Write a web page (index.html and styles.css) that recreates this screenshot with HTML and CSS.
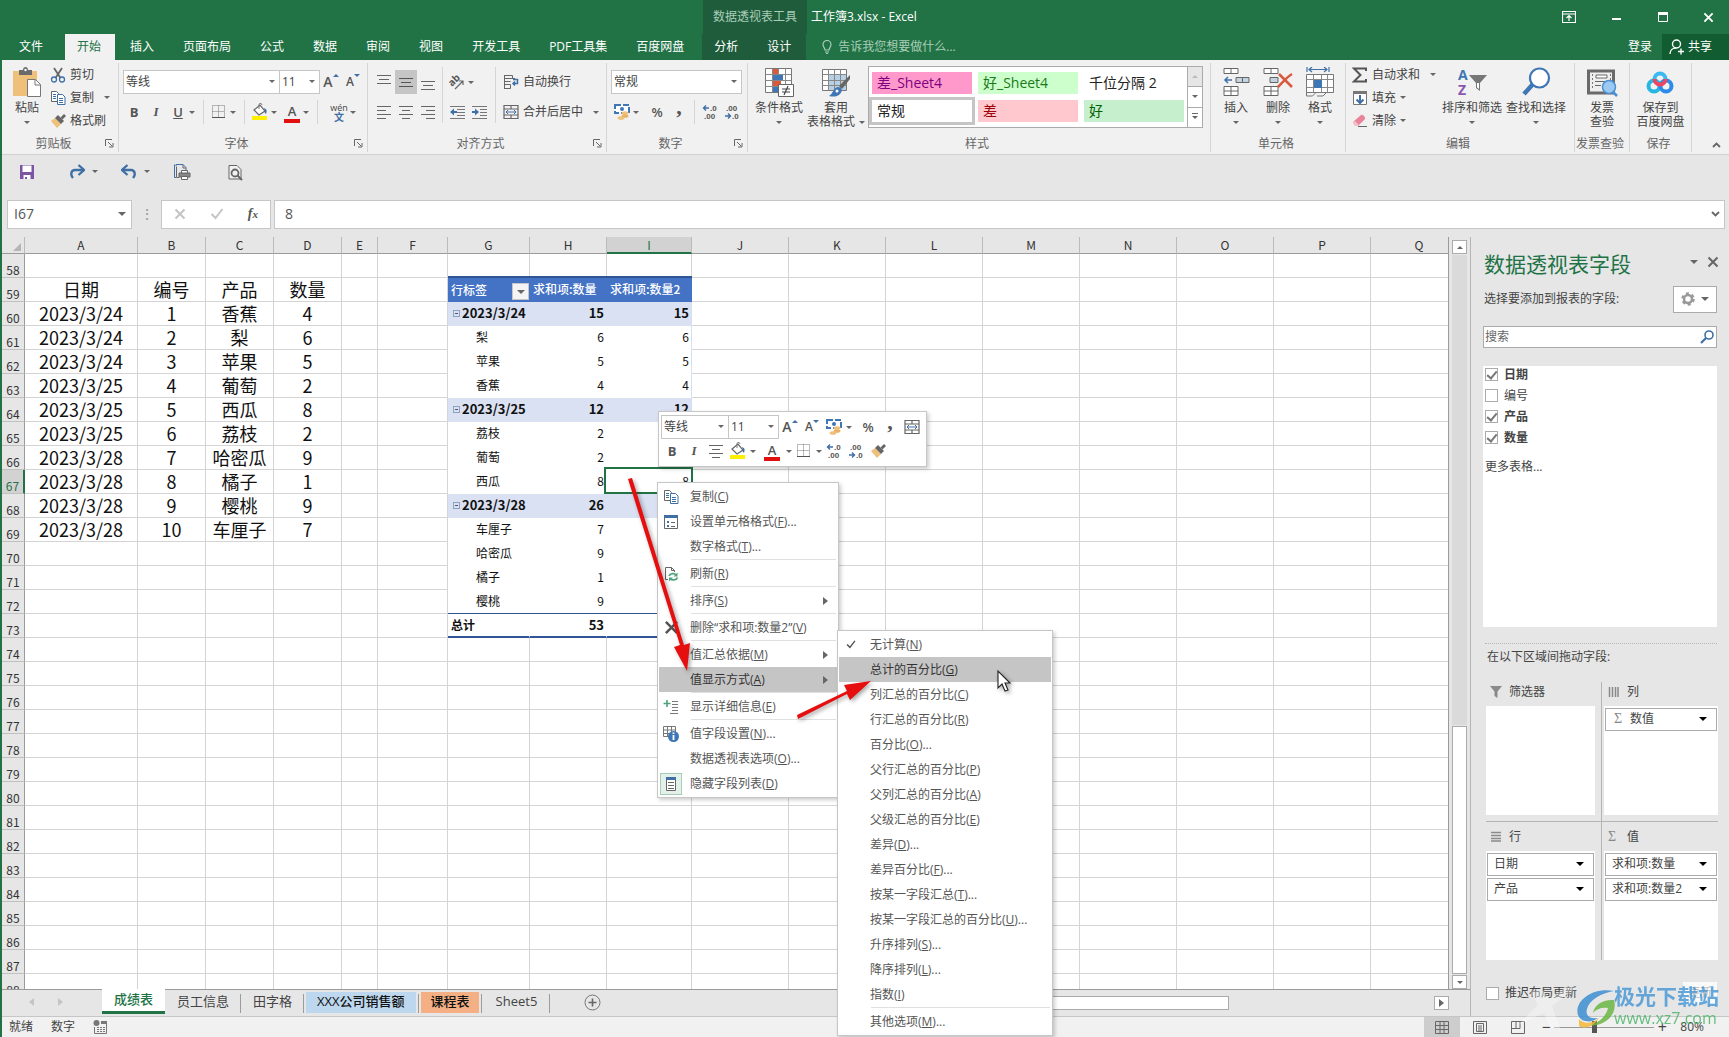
FILE: index.html
```html
<!DOCTYPE html>
<html lang="zh-CN">
<head>
<meta charset="utf-8">
<title>工作簿3.xlsx - Excel</title>
<link rel="stylesheet" href="styles.css">
</head>
<body>
<svg class="defs" aria-hidden="true">
  <symbol id="i-paste" viewBox="0 0 30 30"><path d="M1 4h24v25H1z" fill="#eec079"/><path d="M7 3h4c0-4 5-4 5 0h4v5H7z" fill="#6a6a6a"/><circle cx="13.500" cy="3" r="1.200" fill="#fff"/><path d="M15.500 12.500h8l5 5v12h-13z" fill="#fff" stroke="#777"/><path d="M23 12.500v5.500h5.500" fill="none" stroke="#777"/></symbol>
  <symbol id="i-cut" viewBox="0 0 16 16"><path d="M4 1l6.500 10M12 1L5.500 11" stroke="#666" stroke-width="1.800" fill="none"/><circle cx="4" cy="12.500" r="2.500" fill="none" stroke="#3f6fa5" stroke-width="1.300"/><circle cx="12" cy="12.500" r="2.500" fill="none" stroke="#3f6fa5" stroke-width="1.300"/></symbol>
  <symbol id="i-copy" viewBox="0 0 16 16"><path d="M1.500 1.500h5l2 2v8h-7z" fill="#fff" stroke="#666"/><path d="M3 4.500h3M3 6.500h3M3 8.500h3" stroke="#3f6fa5"/><path d="M7.500 4.500h5l2.500 2.500v7.500H7.500z" fill="#fff" stroke="#3f6fa5"/><path d="M9 8.500h4M9 10.500h4M9 12.500h4" stroke="#3f6fa5"/></symbol>
  <symbol id="i-brush" viewBox="0 0 16 16"><path d="M1 8l4-3 6 6-4 4z" fill="#eec079"/><path d="M5 5l3-3 6 6-3 3z" fill="#666"/><path d="M10.500 4.500L14 1l2 2-3.500 3.500z" fill="#666"/></symbol>
  <symbol id="i-border" viewBox="0 0 16 16"><path d="M1.500 1.500h12v12h-12zM7.500 1.500v12M1.500 7.500h12" fill="none" stroke="#777" stroke-dasharray="1 1"/><path d="M1 13.500h13" stroke="#555"/></symbol>
  <symbol id="i-fill" viewBox="0 0 18 18"><path d="M3 7l6-5 5 6-6 4z" fill="#fff" stroke="#666" stroke-width="1.200"/><path d="M8 6V1.500c0-1.500 3-1.500 3 .5" fill="none" stroke="#777"/><path d="M13 5c3 1 3 3 2 6-1-1-2-2-1-3z" fill="#3f6fa5"/><path d="M1 13h15v4H1z" fill="#ffef00"/></symbol>
  <symbol id="i-money" viewBox="0 0 18 18"><path d="M2 2h14v8H2z" fill="#fff" stroke="#3f76b5" stroke-width="2" stroke-dasharray="6 2"/><circle cx="9" cy="6" r="2" fill="#3f76b5"/><ellipse cx="12" cy="10" rx="3.500" ry="1.800" fill="#eec079"/><ellipse cx="12" cy="13" rx="3.500" ry="1.800" fill="#e8b268"/><ellipse cx="8" cy="15" rx="3.500" ry="1.800" fill="#eec079"/></symbol>
  <symbol id="i-merge" viewBox="0 0 16 16"><path d="M1 1.500h14v13H1zM1 5h14M1 11h14M8 1.500V5M8 11v3.500" fill="none" stroke="#666" stroke-width="1.200"/><path d="M3 8h10M5 6L3 8l2 2M11 6l2 2-2 2" fill="none" stroke="#3f6fa5"/></symbol>
  <symbol id="i-al" viewBox="0 0 16 16"><path d="M1 2.500h14M1 6.500h9M1 10.500h14M1 14.500h9" stroke="#666" fill="none"/></symbol>
  <symbol id="i-ac" viewBox="0 0 16 16"><path d="M1 2.500h14M4 6.500h8M1 10.500h14M4 14.500h8" stroke="#666" fill="none"/></symbol>
  <symbol id="i-ar" viewBox="0 0 16 16"><path d="M1 2.500h14M6 6.500h9M1 10.500h14M6 14.500h9" stroke="#666" fill="none"/></symbol>
  <symbol id="i-vt" viewBox="0 0 16 16"><path d="M1 1.500h14M3 5.500h10M1 9.500h14" stroke="#666" fill="none"/></symbol>
  <symbol id="i-vm" viewBox="0 0 16 16"><path d="M1 4.500h14M3 8.500h10M1 12.500h14" stroke="#555" fill="none"/></symbol>
  <symbol id="i-vb" viewBox="0 0 16 16"><path d="M1 7.500h14M3 11.500h10M1 15.500h14" stroke="#666" fill="none"/></symbol>
  <symbol id="i-outdent" viewBox="0 0 17 16"><path d="M1 2.500h15M8 5.500h8M8 8.500h8M8 11.500h8M1 14.500h15" stroke="#777"/><path d="M1 8l4-3.500v2.500h3v2H5v2.500z" fill="#3f6fa5"/></symbol>
  <symbol id="i-indent" viewBox="0 0 17 16"><path d="M1 2.500h15M9 5.500h7M9 8.500h7M9 11.500h7M1 14.500h15" stroke="#777"/><path d="M8 8L4 4.500v2.500H1v2h3v2.500z" fill="#3f6fa5"/></symbol>
  <symbol id="i-wrap" viewBox="0 0 16 16"><path d="M1.500 1v14M1.500 1.500h8v3h-8M1.500 7.500h6M1.500 10.500h6v4h-6M4 4.500h8" stroke="#666" fill="none"/><path d="M10 5.500h4.500v4H10M12 7.500L10 9.500l2 2" stroke="#3f6fa5" stroke-width="1.500" fill="none"/></symbol>
  <symbol id="i-incd" viewBox="0 0 16 16"><path d="M7 4H1.500M4 1.500L1.500 4 4 6.500" stroke="#3f6fa5" stroke-width="1.400" fill="none"/><text x="8" y="7" class="dg">.0</text><text x="2" y="15" class="dg">.00</text></symbol>
  <symbol id="i-decd" viewBox="0 0 16 16"><text x="2" y="7" class="dg">.00</text><path d="M1 12h5.500M4 9.500L6.500 12 4 14.500" stroke="#3f6fa5" stroke-width="1.400" fill="none"/><text x="8" y="15" class="dg">.0</text></symbol>
  <symbol id="i-cond" viewBox="0 0 30 30"><path d="M1.500 1.500h26v24h-26z" fill="#fff" stroke="#777"/><path d="M8.500 1.500v24M14.500 1.500v24M21.500 1.500v24M1.500 7.500h26M1.500 13.500h26M1.500 19.500h26" stroke="#888"/><path d="M9 2h5v5H9z" fill="#d8593b"/><path d="M9 8h10v5H9z" fill="#3f76b5"/><path d="M9 14h8v5H9z" fill="#d8593b"/><path d="M9 20h5v5H9z" fill="#3f76b5"/><path d="M14.500 17.500h15v12h-15z" fill="#fff" stroke="#666"/><path d="M18 22h8M18 25h8M24 19l-4 9" stroke="#444" stroke-width="1.200"/></symbol>
  <symbol id="i-tfmt" viewBox="0 0 30 30"><path d="M1.500 2.500h24v21h-24z" fill="#fff" stroke="#777"/><path d="M8 8h17v15H8z" fill="#b8d0e4"/><path d="M7.500 2.500v21M13.500 2.500v21M19.500 2.500v21M1.500 7.500h24M1.500 13.500h24M1.500 18.500h24" stroke="#888"/><path d="M29 8v4l-8 10-3-3z" fill="#666"/><path d="M17 20c4 0 5 4 2 7-3 3-7 3-11 2 4-2 4-8 9-9z" fill="#3f76b5"/><circle cx="16" cy="24" r="1.500" fill="#fff"/></symbol>
  <symbol id="i-ins" viewBox="0 0 28 30"><path d="M2 1.500h14v5H2zM9 1.500v5M2 19.500h14v9H2zM9 19.500v9M2 24h14" fill="#fff" stroke="#666"/><path d="M14 10.500h13v5H14zM20.500 10.500v5" fill="#c3d3df" stroke="#666"/><path d="M10 13H3M6 10l-3 3 3 3" fill="none" stroke="#3f6fa5" stroke-width="1.500"/></symbol>
  <symbol id="i-del" viewBox="0 0 30 30"><path d="M1 1.500h14v5H1zM8 1.500v5M1 19.500h14v9H1zM8 19.500v9M1 24h14" fill="#fff" stroke="#666"/><path d="M7 10.500h8v5H7z" fill="#c3d3df" stroke="#666"/><path d="M16 7l13 13M29 7c-5 3-9 8-14 13" fill="none" stroke="#d8593b" stroke-width="2.500"/></symbol>
  <symbol id="i-fmt" viewBox="0 0 30 30"><path d="M2 0v5M24 0v5M4 2.500h18M7 0L4 2.500 7 5M19 0l3 2.500L19 5" fill="none" stroke="#3f6fa5" stroke-width="1.200"/><path d="M1.500 7.500h27v18h-27z" fill="#fff" stroke="#777"/><path d="M8.500 7.500v18M16.500 7.500v18M22.500 7.500v18M1.500 12.500h27M1.500 20.500h27" stroke="#888"/><path d="M9 13h8v8H9z" fill="#3f76b5"/><path d="M1.500 25v4h6l3-3M12 29h6l3-3" fill="none" stroke="#777"/></symbol>
  <symbol id="i-sum" viewBox="0 0 16 16"><path d="M14 4V1.500H2L8.500 8 2 14.500h12V12" fill="none" stroke="#555" stroke-width="2"/></symbol>
  <symbol id="i-down" viewBox="0 0 16 16"><path d="M1.500 1.500h13v13h-13z" fill="#fff" stroke="#777"/><path d="M1 1h14v3H1z" fill="#777"/><path d="M8 5v8M4.500 9.500L8 13l3.500-3.500" fill="none" stroke="#3f6fa5" stroke-width="2"/></symbol>
  <symbol id="i-erase" viewBox="0 0 16 16"><path d="M1 9l8-7c1-1 5 2 4 4l-7 7H3z" fill="#e8839a"/><path d="M1 9l2-1 4 4-1 1H3z" fill="#f3c0ca"/><path d="M6 13.500h9" stroke="#666"/></symbol>
  <symbol id="i-sort" viewBox="0 0 30 30"><text x="1" y="13" class="az a">A</text><text x="1" y="28" class="az z">Z</text><path d="M12 8h18l-7 8v8l-4-3v-5z" fill="#777"/><path d="M20 16l2 0v6l-2-1.500z" fill="#fff"/></symbol>
  <symbol id="i-find" viewBox="0 0 30 30"><path d="M12 17L3 27" stroke="#3f76b5" stroke-width="4.500"/><circle cx="18.500" cy="11" r="9.500" fill="#fff" stroke="#3f76b5" stroke-width="2.200"/></symbol>
  <symbol id="i-inv" viewBox="0 0 32 30"><path d="M2.500 4h25v22h-25z" fill="#eee" stroke="#6a6a6a" stroke-width="3"/><path d="M6.500 7v16M24.500 7v8" stroke="#777" stroke-dasharray="2 2"/><path d="M10 8h11v3H10zM9 14.500h12M9 18.500h6" fill="#fff" stroke="#666"/><circle cx="23" cy="20" r="6.500" fill="#9cc9f2" stroke="#4a91d4" stroke-width="1.500"/><path d="M27 25l4 4" stroke="#4a91d4" stroke-width="2.500"/></symbol>
  <symbol id="i-disk" viewBox="0 0 30 30"><circle cx="9" cy="19" r="5.500" fill="none" stroke="#27b6e2" stroke-width="4"/><circle cx="21" cy="19" r="5.500" fill="none" stroke="#2d8ce8" stroke-width="4"/><path d="M9.500 12a5.500 5.500 0 1 1 11 0" fill="none" stroke="#3cb9ef" stroke-width="4"/><path d="M9.500 12a5.500 5.500 0 0 0 11 0" fill="none" stroke="#ee4562" stroke-width="4"/></symbol>
  <symbol id="i-save" viewBox="0 0 16 16"><path d="M1 1h14v14H1z" fill="#7d53a4"/><path d="M3.500 1.500h9V8h-9z" fill="#fff"/><path d="M4.500 11h7v4h-7z" fill="#fff"/><path d="M6 13h2v2H6z" fill="#7d53a4"/></symbol>
  <symbol id="i-redo" viewBox="0 0 16 16"><path d="M14 6H6C2 6 1 11 4 14" fill="none" stroke="#3f6fa5" stroke-width="2.300"/><path d="M9.500 1L15 6l-5.500 5" fill="none" stroke="#3f6fa5" stroke-width="2.300"/></symbol>
  <symbol id="i-pp" viewBox="0 0 18 18"><path d="M3 3V1.500h7l3 3V8M3 14.500H1.500v-13" fill="none" stroke="#3f6fa5"/><path d="M3.500 3.500v11H6M10 1.500V5h3" fill="none" stroke="#666"/><path d="M6 10h11v4H6z" fill="#888" stroke="#666"/><path d="M8.500 7.500h6V10h-6zM8.500 13.500h6v3h-6z" fill="#fff" stroke="#666"/></symbol>
  <symbol id="i-pv" viewBox="0 0 16 16"><path d="M2 1.500h8l4 4V15H2z" fill="#f2f2f2" stroke="#666"/><circle cx="8" cy="9" r="3.500" fill="#f2f2f2" stroke="#666" stroke-width="1.800"/><path d="M10.500 11.500L15 16" stroke="#666" stroke-width="2"/></symbol>
  <symbol id="i-launch" viewBox="0 0 9 9"><path d="M.5 7V.5H7M3 3l4 4M8 4v4H4" fill="none" stroke="#666"/></symbol>
  <symbol id="i-x" viewBox="0 0 12 12"><path d="M1.500 1.500l9 9M10.500 1.500l-9 9" stroke="currentColor" stroke-width="2"/></symbol>
  <symbol id="i-check" viewBox="0 0 14 12"><path d="M1.500 6l4 4 7-9" fill="none" stroke="currentColor" stroke-width="2"/></symbol>
  <symbol id="i-panel" viewBox="0 0 16 16"><path d="M1.500 1.500h13v13h-13z" fill="#fff" stroke="#666"/><path d="M1 1h14v3H1z" fill="#3f6fa5"/><path d="M4 7h2v2H4zM4 11h2v2H4z" fill="#3f6fa5"/><path d="M8 8.500h4M8 12.500h4" stroke="#666"/></symbol>
  <symbol id="i-refresh" viewBox="0 0 16 16"><path d="M5 13.500H2.500v-12h6l3 3V6M8.500 1.500v3h3" fill="none" stroke="#666"/><path d="M6 10c1-3 6-3 7-1M14.500 11.500c-1 3-6 3-7 1" fill="none" stroke="#4ea37a" stroke-width="1.800"/><path d="M14.500 6.500v4h-4zM6 15.500v-4h4z" fill="#4ea37a"/></symbol>
  <symbol id="i-detail" viewBox="0 0 16 16"><path d="M4 1v7M.5 4.500h7" stroke="#4ea37a" stroke-width="1.600"/><path d="M9 2.500h6M9 5.500h6M9 8.500h6M9 11.500h6M7 14.500h8" stroke="#777"/></symbol>
  <symbol id="i-info" viewBox="0 0 18 18"><path d="M1.500 1.500h12v10h-12zM5.500 1.500v10M9.500 1.500v10M1.500 5h12M1.500 8.500h12" fill="#fff" stroke="#777"/><circle cx="11.500" cy="11.500" r="5.500" fill="#3f76b5"/><path d="M11.500 10v5M11.500 7.500v1.500" stroke="#fff" stroke-width="1.800"/></symbol>
  <symbol id="i-list" viewBox="0 0 16 16"><path d="M3.500 1.500h9v13h-9z" fill="#fff" stroke="#666"/><path d="M3 1h10v3H3z" fill="#3f6fa5"/><path d="M5 6.500h6M5 9.500h6M5 12.500h6" stroke="#666"/></symbol>
  <symbol id="i-funnel" viewBox="0 0 12 12"><path d="M0 0h12L7.500 5.500V12l-3-2V5.500z" fill="#8a8a8a"/></symbol>
</svg>

<div class="window">
  <header class="top">
    <div class="titlebar">
      <span class="ctx-title">数据透视表工具</span>
      <span class="doc-title">工作簿3.xlsx - Excel</span>
      <div class="winbtns">
        <button aria-label="功能区显示选项"><svg width="14" height="12" viewBox="0 0 14 12"><path d="M.5.5h13v11H.5zM.5 3h13M7 10V5M4.500 7L7 4.500 9.500 7" fill="none" stroke="#fff" stroke-width="1.200"/></svg></button>
        <button aria-label="最小化"><svg width="10" height="10" viewBox="0 0 10 10"><path d="M0 7h9" stroke="#fff" stroke-width="2"/></svg></button>
        <button aria-label="最大化"><svg width="10" height="10" viewBox="0 0 10 10"><path d="M.5.5h9v9h-9z" fill="none" stroke="#fff"/><path d="M0 0h10v3H0z" fill="#fff"/></svg></button>
        <button aria-label="关闭" class="white"><svg width="11" height="11"><use href="#i-x"/></svg></button>
      </div>
    </div>
    <nav class="tabs">
      <button class="file">文件</button><button class="on">开始</button><button>插入</button><button>页面布局</button><button>公式</button><button>数据</button><button>审阅</button><button>视图</button><button>开发工具</button><button>PDF工具集</button><button>百度网盘</button><span class="ctx-tabs"><button>分析</button><button>设计</button></span>
      <button class="tell"><svg width="10" height="14" viewBox="0 0 10 14"><path d="M3 10C3 8 1 7 1 4.500a4 4 0 0 1 8 0C9 7 7 8 7 10zM3 12h4M4 13.500h2" fill="none" stroke="#a9cdb8" stroke-width="1.200"/></svg>告诉我您想要做什么...</button>
      <button class="login">登录</button>
      <button class="share"><svg width="15" height="16" viewBox="0 0 15 16"><circle cx="7.500" cy="5" r="4" fill="none" stroke="#fff" stroke-width="1.400"/><path d="M1 15c0-4 3-6 6-6M9 12.500h6M12 9.500v6" fill="none" stroke="#fff" stroke-width="1.400"/></svg>共享</button>
    </nav>
  </header>

  <section class="ribbon">
    <div class="group">
      <div class="body clip">
        <button class="big"><svg width="30" height="30"><use href="#i-paste"/></svg><span>粘贴</span><i class="dd"></i></button>
        <div class="stack">
          <button class="sm"><svg width="16" height="16"><use href="#i-cut"/></svg>剪切</button>
          <button class="sm"><svg width="16" height="16"><use href="#i-copy"/></svg>复制<i class="dd far"></i></button>
          <button class="sm"><svg width="16" height="16"><use href="#i-brush"/></svg>格式刷</button>
        </div>
      </div>
      <footer><span>剪贴板</span><svg width="9" height="9"><use href="#i-launch"/></svg></footer>
    </div>
    <div class="group">
      <div class="body rows">
        <div class="row">
          <span class="sel w-font"><select aria-label="字体"><option>等线</option></select></span><span class="sel w-size"><select aria-label="字号"><option>11</option></select></span>
          <button class="ic glyph lg">A<sup class="up"></sup></button><button class="ic glyph md">A<sup class="dn"></sup></button>
        </div>
        <div class="row">
          <button class="ic glyph b">B</button><button class="ic glyph it">I</button><button class="ic glyph u">U</button><i class="dd"></i>
          <hr><button class="ic" aria-label="边框"><svg width="16" height="16"><use href="#i-border"/></svg></button><i class="dd"></i>
          <hr><button class="ic" aria-label="填充颜色"><svg width="18" height="18"><use href="#i-fill"/></svg></button><i class="dd"></i><button class="ic glyph fc">A</button><i class="dd"></i>
          <hr><button class="ic wen"><span>wén</span><b>文</b></button><i class="dd"></i>
        </div>
      </div>
      <footer><span>字体</span><svg width="9" height="9"><use href="#i-launch"/></svg></footer>
    </div>
    <div class="group">
      <div class="body align">
        <div class="rows">
          <div class="row"><button class="ic" aria-label="顶端对齐"><svg width="16" height="16"><use href="#i-vt"/></svg></button><button class="ic pressed" aria-label="垂直居中"><svg width="16" height="16"><use href="#i-vm"/></svg></button><button class="ic" aria-label="底端对齐"><svg width="16" height="16"><use href="#i-vb"/></svg></button></div>
          <div class="row"><button class="ic" aria-label="左对齐"><svg width="16" height="16"><use href="#i-al"/></svg></button><button class="ic" aria-label="居中"><svg width="16" height="16"><use href="#i-ac"/></svg></button><button class="ic" aria-label="右对齐"><svg width="16" height="16"><use href="#i-ar"/></svg></button></div>
        </div>
        <div class="rows ruled w-ind">
          <div class="row"><button class="ic" aria-label="方向"><svg width="18" height="18" viewBox="0 0 18 18"><text x="1" y="11" class="ab" transform="rotate(-45 6 9)">ab</text><path d="M7 16l8-8M11 8h4v4" fill="none" stroke="#666" stroke-width="1.200"/></svg></button><i class="dd"></i></div>
          <div class="row"><button class="ic" aria-label="减少缩进量"><svg width="17" height="16"><use href="#i-outdent"/></svg></button><button class="ic" aria-label="增加缩进量"><svg width="17" height="16"><use href="#i-indent"/></svg></button></div>
        </div>
        <div class="rows ruled">
          <div class="row"><button class="sm"><svg width="16" height="16"><use href="#i-wrap"/></svg>自动换行</button></div>
          <div class="row"><button class="sm"><svg width="16" height="16"><use href="#i-merge"/></svg>合并后居中<i class="dd far"></i></button></div>
        </div>
      </div>
      <footer><span>对齐方式</span><svg width="9" height="9"><use href="#i-launch"/></svg></footer>
    </div>
    <div class="group">
      <div class="body rows">
        <div class="row"><span class="sel w-num"><select aria-label="数字格式"><option>常规</option></select></span></div>
        <div class="row num-row"><button class="ic" aria-label="会计数字格式"><svg width="18" height="18"><use href="#i-money"/></svg></button><i class="dd wide"></i><button class="ic glyph">%</button><button class="ic comma">,</button><hr><button class="ic" aria-label="增加小数位数"><svg width="16" height="16"><use href="#i-incd"/></svg></button><button class="ic" aria-label="减少小数位数"><svg width="16" height="16"><use href="#i-decd"/></svg></button></div>
      </div>
      <footer><span>数字</span><svg width="9" height="9"><use href="#i-launch"/></svg></footer>
    </div>
    <div class="group">
      <div class="body styles">
        <button class="big"><svg width="30" height="30"><use href="#i-cond"/></svg><span>条件格式</span><i class="dd"></i></button>
        <button class="big"><svg width="30" height="30"><use href="#i-tfmt"/></svg><span>套用</span><span class="inl">表格格式<i class="dd"></i></span></button>
        <div class="gallery">
          <div class="swatches">
            <button class="s-pink">差_Sheet4</button><button class="s-lime">好_Sheet4</button><button>千位分隔 2</button>
            <button class="s-on">常规</button><button class="s-red">差</button><button class="s-green">好</button>
          </div>
          <div class="gscroll"><button class="off" aria-label="上一行"><i class="uu"></i></button><button aria-label="下一行"><i class="dd"></i></button><button aria-label="其他"><i class="dd bar"></i></button></div>
        </div>
      </div>
      <footer><span>样式</span></footer>
    </div>
    <div class="group">
      <div class="body cells">
        <button class="big"><svg width="28" height="30"><use href="#i-ins"/></svg><span>插入</span><i class="dd"></i></button>
        <button class="big"><svg width="30" height="30"><use href="#i-del"/></svg><span>删除</span><i class="dd"></i></button>
        <button class="big"><svg width="30" height="30"><use href="#i-fmt"/></svg><span>格式</span><i class="dd"></i></button>
      </div>
      <footer><span>单元格</span></footer>
    </div>
    <div class="group">
      <div class="body edit">
        <div class="stack">
          <button class="sm"><svg width="16" height="16"><use href="#i-sum"/></svg>自动求和<i class="dd far"></i></button>
          <button class="sm"><svg width="16" height="16"><use href="#i-down"/></svg>填充<i class="dd"></i></button>
          <button class="sm"><svg width="16" height="16"><use href="#i-erase"/></svg>清除<i class="dd"></i></button>
        </div>
        <button class="big"><svg width="30" height="30"><use href="#i-sort"/></svg><span>排序和筛选</span><i class="dd"></i></button>
        <button class="big"><svg width="30" height="30"><use href="#i-find"/></svg><span>查找和选择</span><i class="dd"></i></button>
      </div>
      <footer><span>编辑</span></footer>
    </div>
    <div class="group">
      <div class="body one"><button class="big"><svg width="32" height="30"><use href="#i-inv"/></svg><span>发票</span><span>查验</span></button></div>
      <footer><span>发票查验</span></footer>
    </div>
    <div class="group">
      <div class="body one"><button class="big"><svg width="30" height="30"><use href="#i-disk"/></svg><span>保存到</span><span>百度网盘</span></button></div>
      <footer><span>保存</span></footer>
    </div>
    <button class="collapse" aria-label="折叠功能区"><svg width="9" height="6" viewBox="0 0 9 6"><path d="M1 5l3.500-3.500L8 5" fill="none" stroke="#666" stroke-width="1.800"/></svg></button>
  </section>

  <div class="qat">
    <button aria-label="保存"><svg width="16" height="16"><use href="#i-save"/></svg></button>
    <button aria-label="恢复"><svg width="16" height="16"><use href="#i-redo"/></svg><i class="dd"></i></button>
    <button aria-label="撤消"><svg width="16" height="16" class="flip"><use href="#i-redo"/></svg><i class="dd"></i></button>
    <button aria-label="打印"><svg width="18" height="18"><use href="#i-pp"/></svg></button>
    <button aria-label="打印预览"><svg width="16" height="18"><use href="#i-pv"/></svg></button>
  </div>

  <div class="fbar">
    <label class="namebox"><input value="I67" aria-label="名称框"><i class="dd"></i></label>
    <span class="dots">⋮</span>
    <div class="fbtns"><button class="pale" aria-label="取消"><svg width="12" height="12"><use href="#i-x"/></svg></button><button class="pale" aria-label="输入"><svg width="14" height="12"><use href="#i-check"/></svg></button><button class="fx"><span>f</span><small>x</small></button></div>
    <label class="formula"><input value="8" aria-label="编辑栏"><svg width="9" height="6" viewBox="0 0 9 6"><path d="M1 1l3.500 3.500L8 1" fill="none" stroke="#666" stroke-width="1.800"/></svg></label>
  </div>

  <main class="main">
    <div class="book">
      <div class="viewport"><table class="sheet" id="sheet"></table></div>
      <div class="vscroll"><button aria-label="向上滚动"><i class="uu"></i></button><div class="track"></div><div class="thumb"></div><button aria-label="向下滚动"><i class="dd"></i></button></div>
      <div class="sheetbar">
        <div class="nav"><i class="la"></i><i class="ra"></i></div>
        <div class="stabs"><button class="on">成绩表</button><button>员工信息</button><button>田字格</button><button class="blue">XXX公司销售额</button><button class="orange">课程表</button><button>Sheet5</button></div>
        <button class="add" aria-label="新工作表"><svg width="17" height="17" viewBox="0 0 17 17"><circle cx="8.500" cy="8.500" r="7.500" fill="none" stroke="#777"/><path d="M8.500 4.500v8M4.500 8.500h8" stroke="#666" stroke-width="1.600"/></svg></button>
        <div class="hscroll"><div class="hthumb"></div><button aria-label="向右滚动"><i class="ra dark"></i></button></div>
      </div>
    </div>

    <aside class="pane">
      <div class="ptitle"><h2>数据透视表字段</h2><i class="dd big-dd"></i><button aria-label="关闭"><svg width="12" height="12"><use href="#i-x"/></svg></button></div>
      <div class="psub"><span>选择要添加到报表的字段:</span><button class="gear" aria-label="工具"><svg width="14" height="14" viewBox="0 0 14 14"><circle cx="7" cy="7" r="4" fill="none" stroke="#999" stroke-width="2.500"/><circle cx="7" cy="7" r="5.500" fill="none" stroke="#999" stroke-width="2.500" stroke-dasharray="2.900 2.900"/></svg><i class="dd big-dd"></i></button></div>
      <label class="search"><input placeholder="搜索" aria-label="搜索"><svg width="14" height="14" viewBox="0 0 14 14"><circle cx="9" cy="5" r="4" fill="none" stroke="#3f6fa5" stroke-width="1.600"/><path d="M6 8l-5 5" stroke="#3f6fa5" stroke-width="2.200"/></svg></label>
      <div class="fields">
        <label class="bold"><input type="checkbox" checked>日期</label>
        <label><input type="checkbox">编号</label>
        <label class="bold"><input type="checkbox" checked>产品</label>
        <label class="bold"><input type="checkbox" checked>数量</label>
        <a href="#more">更多表格...</a>
      </div>
      <div class="drag">在以下区域间拖动字段:</div>
      <div class="areas">
        <section><h3><svg width="12" height="12"><use href="#i-funnel"/></svg>筛选器</h3><div class="drop"></div></section>
        <section><h3><svg width="12" height="12" viewBox="0 0 12 12"><path d="M1.500 1v10M4.500 1v10M7.500 1v10M10 1v10" stroke="#8a8a8a" stroke-width="1.500"/></svg>列</h3><div class="drop"><button><em>Σ</em>数值<i class="dd k"></i></button></div></section>
        <section><h3><svg width="12" height="12" viewBox="0 0 12 12"><path d="M1 1.500h10M1 4.500h10M1 7.500h10M1 10h10" stroke="#8a8a8a" stroke-width="1.500"/></svg>行</h3><div class="drop"><button>日期<i class="dd k"></i></button><button>产品<i class="dd k"></i></button></div></section>
        <section><h3><em>Σ</em>值</h3><div class="drop"><button>求和项:数量<i class="dd k"></i></button><button>求和项:数量2<i class="dd k"></i></button></div></section>
      </div>
      <div class="defer"><label><input type="checkbox">推迟布局更新</label><button>更新</button></div>
    </aside>
  </main>

  <footer class="status">
    <span>就绪</span><span>数字</span>
    <svg width="14" height="14" viewBox="0 0 14 14"><circle cx="3.500" cy="3" r="3" fill="#777"/><path d="M8 1h6v3H8z" fill="#777"/><path d="M1.500 7v6.500h12V4" fill="none" stroke="#777"/><path d="M4 7.500h8M4 9.500h8M4 11.500h8" stroke="#777" stroke-dasharray="2 1"/></svg>
    <div class="views">
      <button class="on" aria-label="普通"><svg width="14" height="13" viewBox="0 0 14 13"><path d="M.5.5h13v12H.5zM5 .5v12M9 .5v12M.5 4.500h13M.5 8.500h13" fill="none" stroke="#666"/></svg></button>
      <button aria-label="页面布局"><svg width="14" height="13" viewBox="0 0 14 13"><path d="M.5.5h13v12H.5zM3.500 2.500h7v8h-7zM5 5h4M5 7h4M5 9h4" fill="none" stroke="#666"/></svg></button>
      <button aria-label="分页预览"><svg width="14" height="13" viewBox="0 0 14 13"><path d="M.5.5h13v12H.5zM5 .5v7M9 .5v7M.5 7.500h8.500" fill="none" stroke="#666"/></svg></button>
    </div>
    <div class="zoombox"><button class="zb">−</button><input type="range" class="zoom" min="0" max="100" value="40" aria-label="缩放"><button class="zb">+</button><span class="pct">80%</span></div>
  </footer>

  <div class="minibar">
    <div class="row"><span class="sel w-mf"><select aria-label="字体"><option>等线</option></select></span><span class="sel w-ms"><select aria-label="字号"><option>11</option></select></span><button class="ic glyph lg">A<sup class="up"></sup></button><button class="ic glyph md">A<sup class="dn"></sup></button><button class="ic" aria-label="会计数字格式"><svg width="18" height="18"><use href="#i-money"/></svg></button><i class="dd"></i><button class="ic glyph pc">%</button><button class="ic comma">,</button><button class="ic" aria-label="合并后居中"><svg width="16" height="16"><use href="#i-merge"/></svg></button></div>
    <div class="row"><button class="ic glyph b">B</button><button class="ic glyph it">I</button><button class="ic" aria-label="居中"><svg width="16" height="16"><use href="#i-ac"/></svg></button><button class="ic" aria-label="填充颜色"><svg width="18" height="18"><use href="#i-fill"/></svg></button><i class="dd"></i><button class="ic glyph fc">A</button><i class="dd"></i><button class="ic" aria-label="边框"><svg width="16" height="16"><use href="#i-border"/></svg></button><i class="dd"></i><button class="ic" aria-label="增加小数位数"><svg width="16" height="16"><use href="#i-incd"/></svg></button><button class="ic" aria-label="减少小数位数"><svg width="16" height="16"><use href="#i-decd"/></svg></button><button class="ic" aria-label="格式刷"><svg width="16" height="16"><use href="#i-brush"/></svg></button></div>
  </div>

  <div class="menu ctx">
    <button><svg width="16" height="16"><use href="#i-copy"/></svg><span>复制(<u>C</u>)</span></button>
    <button><svg width="16" height="16"><use href="#i-panel"/></svg><span>设置单元格格式(<u>F</u>)...</span></button>
    <button><span>数字格式(<u>T</u>)...</span></button><hr>
    <button><svg width="16" height="16"><use href="#i-refresh"/></svg><span>刷新(<u>R</u>)</span></button><hr>
    <button><span>排序(<u>S</u>)</span><i class="ra sub"></i></button><hr>
    <button><svg width="15" height="15"><use href="#i-x"/></svg><span>删除“求和项:数量2”(<u>V</u>)</span></button><hr>
    <button><span>值汇总依据(<u>M</u>)</span><i class="ra sub"></i></button>
    <button class="hot"><span>值显示方式(<u>A</u>)</span><i class="ra sub"></i></button><hr>
    <button><svg width="16" height="16"><use href="#i-detail"/></svg><span>显示详细信息(<u>E</u>)</span></button><hr>
    <button><svg width="18" height="18"><use href="#i-info"/></svg><span>值字段设置(<u>N</u>)...</span></button>
    <button><span>数据透视表选项(<u>O</u>)...</span></button>
    <button><svg width="20" height="20" class="boxed"><use href="#i-list"/></svg><span>隐藏字段列表(<u>D</u>)</span></button>
  </div>

  <div class="menu submenu">
    <button><svg width="10" height="9"><use href="#i-check"/></svg><span>无计算(<u>N</u>)</span></button>
    <button class="hot"><span>总计的百分比(<u>G</u>)</span></button>
    <button><span>列汇总的百分比(<u>C</u>)</span></button>
    <button><span>行汇总的百分比(<u>R</u>)</span></button>
    <button><span>百分比(<u>O</u>)...</span></button>
    <button><span>父行汇总的百分比(<u>P</u>)</span></button>
    <button><span>父列汇总的百分比(<u>A</u>)</span></button>
    <button><span>父级汇总的百分比(<u>E</u>)</span></button>
    <button><span>差异(<u>D</u>)...</span></button>
    <button><span>差异百分比(<u>F</u>)...</span></button>
    <button><span>按某一字段汇总(<u>T</u>)...</span></button>
    <button><span>按某一字段汇总的百分比(<u>U</u>)...</span></button>
    <button><span>升序排列(<u>S</u>)...</span></button>
    <button><span>降序排列(<u>L</u>)...</span></button>
    <button><span>指数(<u>I</u>)</span></button><hr>
    <button><span>其他选项(<u>M</u>)...</span></button>
  </div>

  <svg class="arrows" width="400" height="260" viewBox="0 0 400 260" aria-hidden="true">
    <g fill="#e60f0f"><path d="M8 8l4-1 52 167 6-2-3 28-13-24 6-2z"/><path d="M177 244l50-24-3-6 27-4-21 19-3-6-49 25z"/></g>
    <path d="M378 200v17l4-4 3 7 3-1-3-7h5z" fill="#fff" stroke="#222" stroke-width="1.100"/>
  </svg>

  <div class="mark">
    <svg width="150" height="50" viewBox="0 0 150 50" aria-hidden="true"><path d="M14 10h14l4 8L52 5l8 2-24 18 8 22H34l-6-15L2 44l20-20z" fill="#fff" opacity=".4"/><path d="M98 10C74 6 58 22 62 34c3 8 14 8 20 3-8 1-13-2-11-9 2-9 14-16 27-18z" fill="#3e8ed0"/><path d="M98 19c4 14-8 27-28 26 12-2 20-9 22-18-6-1-12 1-15 5 1-8 10-14 21-13z" fill="#6cb644"/><path d="M63 38c5 6 15 4 20-1-4 8-14 12-20 8z" fill="#f2b93b"/></svg>
    <div><strong>极光下载站</strong><a href="#site">www.xz7.com</a></div>
  </div>
</div>
<script src="script.js"></script>
</body>
</html>
```
FILE: styles.css
```css
* { box-sizing: border-box; }
html, body { margin: 0; height: 100%; }
body { font: 12px/16px "Open Sans", "Noto Sans CJK SC", sans-serif; color: #444; background: #e6e6e6; }
button, input, select { font: inherit; color: inherit; margin: 0; padding: 0; border: 0; background: none; border-radius: 0; }
button { white-space: nowrap; text-align: left; }
input:focus { outline: 0; }
svg { flex: none; display: block; }
i, em { font-style: normal; flex: none; }
.defs { display: none; }
.window { position: relative; height: 100vh; min-height: 700px; display: flex; flex-direction: column; border-left: 2px solid #217346; overflow: hidden; }

/* small triangles */
.dd, .uu { width: 0; height: 0; border: 3px solid transparent; }
.dd { border-top-color: #666; border-bottom: 0; }
.uu { border-bottom-color: #666; border-top: 0; }
.la, .ra { width: 0; height: 0; border: 4px solid transparent; }
.la { border-right: 5px solid #c4c4c4; border-left: 0; }
.ra { border-left: 5px solid #c4c4c4; border-right: 0; }
.ra.dark, .ra.sub { border-left-color: #666; }
.big-dd { border-width: 4px; border-bottom: 0; }
.dd.k { border-width: 4px; border-bottom: 0; border-top-color: #000; }

/* title bar and tabs */
.top { background: #217346; color: #fff; flex: none; }
.titlebar { display: flex; height: 34px; line-height: 34px; padding-left: 701px; }
.ctx-title { width: 104px; text-align: center; background: #1e5c3b; color: #a9cdb8; }
.doc-title { padding-left: 4px; }
.winbtns { margin-left: auto; display: flex; align-items: center; padding-right: 15px; }
.winbtns button { width: 46px; display: flex; justify-content: flex-end; }
.white { color: #fff; }
.tabs { display: flex; height: 26px; }
.tabs button { padding: 0 14px 0 15px; height: 26px; line-height: 24px; }
.tabs .file { padding: 0 22px 0 17px; }
.tabs .on { background: #f1f1f1; color: #217346; padding: 0 14px 0 12px; }
.ctx-tabs { background: #1e5c3b; width: 104px; display: flex; margin-left: 4px; }
.ctx-tabs button { padding: 0 15px 0 12px; }
.ctx-tabs button + button { padding: 0 14px; }
.tabs .tell { display: flex; align-items: center; gap: 6px; color: #a9cdb8; padding: 0 0 0 16px; }
.tabs .login { margin-left: auto; padding: 0 10px; }
.tabs .share { width: 67px; background: #115c30; display: flex; align-items: center; gap: 4px; padding: 0 0 0 7px; }

/* ribbon */
.ribbon { display: grid; grid-template-columns: 117px 249px 239px 141px 463px 135px 229px 55px 62px 1fr; height: 95px; flex: none; background: #f1f1f1; border-bottom: 1px solid #d2d2d2; padding: 3px 0 2px; }
.group { border-right: 1px solid #d5d5d5; display: flex; flex-direction: column; min-width: 0; }
.group .body { flex: 1; display: flex; padding-left: 4px; }
.group footer { height: 17px; display: flex; align-items: center; color: #666; padding-right: 4px; }
.group footer span { flex: 1; text-align: center; white-space: nowrap; }
.body.rows { flex-direction: column; }
.rows .row { height: 30px; }
.row { display: flex; align-items: center; }
.row hr { width: 1px; height: 24px; border: 0; background: #d5d5d5; margin: 0 4px 0 8px; }
.num-row hr { margin: 0 4px; }
.rows { padding-top: 4px; }
.big { display: flex; flex-direction: column; align-items: center; padding-top: 4px; }
.big svg { margin-bottom: 4px; }
.big span { line-height: 14px; }
.big > .dd { margin-top: 6px; }
.inl { display: flex; align-items: center; gap: 4px; }
.stack { display: flex; flex-direction: column; }
.sm { display: flex; align-items: center; gap: 4px; height: 23px; }
.sm .far { margin-left: 6px; }
.clip .big { width: 42px; }
.clip .stack { padding-left: 2px; }
.sel { position: relative; height: 24px; background: #fff; border: 1px solid #c6c6c6; display: block; flex: none; }
.sel + .sel { border-left: 0; }
.sel::after { content: ""; position: absolute; right: 4px; top: 9px; border: 3px solid transparent; border-top-color: #666; border-bottom: 0; pointer-events: none; }
.sel select { appearance: none; width: 100%; height: 22px; padding-left: 2px; }
.w-font { width: 157px; } .w-size { width: 40px; } .w-num { width: 131px; }
.w-mf { width: 68px; } .w-ms { width: 50px; }
.ic { width: 22px; height: 24px; display: flex; align-items: center; justify-content: center; flex: none; position: relative; }
.glyph { font-size: 13px; font-weight: 600; color: #555; }
.lg { font-size: 14px; }
.md { font-size: 12px; }
.glyph sup { width: 0; height: 0; border: 3px solid transparent; align-self: flex-start; }
.glyph sup.up { border-bottom-color: #3f6fa5; border-top: 0; margin-top: 4px; }
.glyph sup.dn { border-top-color: #3f6fa5; border-bottom: 0; margin-top: 4px; }
.b { font-weight: 700; }
.it { font-style: italic; font-family: "Liberation Serif", serif; font-weight: 700; }
.u { text-decoration: underline; }
.fc { border-bottom: 4px solid #e01010; width: 16px; height: 20px; line-height: 14px; margin: 2px 3px 0 7px; }
.wen { flex-direction: column; margin-left: 6px; font-size: 9px; line-height: 9px; }
.wen b { color: #3f6fa5; font-size: 10px; line-height: 10px; }
.comma { font: 700 22px/10px "Liberation Serif", serif; padding-bottom: 10px; color: #555; }
.pressed { background: #c5c5c5; }
.ruled { padding-left: 4px; }
.ruled::before { content: ""; width: 1px; height: 56px; background: #d5d5d5; position: absolute; margin-left: -4px; }
.align .rows:first-child { width: 70px; padding-left: 1px; }
.w-ind { width: 53px; }
.align .sm { padding-left: 4px; }
.dg { font: 700 8px "Liberation Sans", sans-serif; fill: #555; }
.ab { font: 700 10px "Open Sans", sans-serif; fill: #555; }
.az { font: 700 14px "Open Sans", sans-serif; }
.az.a { fill: #3f76b5; } .az.z { fill: #8a56b0; }
.wide { margin-right: 7px; }
.styles .big:first-child { width: 54px; }
.styles .big { width: 60px; }
.gallery { display: flex; width: 335px; height: 62px; margin: 3px 0 0 2px; background: #fff; border: 1px solid #ababab; }
.swatches { flex: 1; display: grid; grid-template-columns: repeat(3, 100px); gap: 6px; padding: 5px 0 0 3px; align-content: start; }
.swatches button { height: 22px; font-size: 14px; line-height: 20px; padding-left: 5px; color: #222; }
.swatches .s-pink { background: #ff99cc; color: #800080; }
.swatches .s-lime { background: #ccffcc; color: #1a7a1a; }
.swatches .s-red { background: #ffc7ce; color: #9c0006; }
.swatches .s-green { background: #c6efce; color: #006100; }
.swatches .s-on { outline: 3px solid #c5c5c5; }
.gscroll { width: 15px; display: grid; border-left: 1px solid #ababab; }
.gscroll button { display: grid; place-items: center; border-bottom: 1px solid #ababab; }
.gscroll button:last-child { border: 0; }
.gscroll .off { background: #e6e6e6; }
.gscroll .off .uu { border-bottom-color: #bbb; }
.bar { position: relative; }
.bar::before { content: ""; position: absolute; left: -3px; top: -6px; width: 6px; height: 1px; background: #666; }
.cells .big { width: 42px; }
.edit .stack { width: 90px; padding-left: 2px; }
.edit .big { width: 64px; }
.group .one { padding: 0; justify-content: center; }
.collapse { align-self: end; justify-self: end; padding: 4px 8px; }

/* quick access and formula bar */
.qat { display: flex; height: 35px; align-items: center; padding: 0 0 2px 17px; flex: none; }
.qat button { display: flex; align-items: center; gap: 7px; margin-right: 34px; }
.qat button:nth-child(2), .qat button:nth-child(3) { margin-right: 23px; }
.qat button:nth-child(4) { margin-right: 36px; }
.flip { transform: scaleX(-1); }
.fbar { display: flex; height: 47px; padding: 10px 4px 8px 5px; font-size: 14px; flex: none; color: #555; }
.namebox, .formula, .fbtns { background: #fff; border: 1px solid #c6c6c6; display: flex; align-items: center; padding-bottom: 2px; }
.namebox { width: 125px; padding-left: 6px; padding-right: 5px; }
.namebox input { width: 100%; min-width: 0; }
.namebox .dd { border-width: 4px; border-bottom: 0; }
.dots { width: 29px; text-align: center; line-height: 28px; color: #999; }
.fbtns { width: 110px; justify-content: space-around; }
.pale { color: #c4c4c4; }
.fx { font: italic 700 14px/16px "Liberation Serif", serif; }
.fx small { font-size: 11px; }
.formula { flex: 1; margin-left: 3px; padding-left: 10px; padding-right: 4px; }
.formula input { flex: 1; }

/* worksheet */
.main { flex: 1; display: flex; min-height: 0; }
.book { flex: 1; min-width: 0; display: grid; grid-template: minmax(0, 1fr) 28px / minmax(0, 1fr) 21px; }
.viewport { overflow: hidden; border-right: 1px solid #9b9b9b; background: #fff; }
.sheet { border-collapse: separate; border-spacing: 0; table-layout: fixed; width: 1466px; font-family: "Noto Sans CJK SC", sans-serif; color: #111; }
.sheet th, .sheet td { padding: 0; white-space: nowrap; height: 24px; border-right: 1px solid #d4d4d4; border-bottom: 1px solid #d4d4d4; line-height: 23px; }
.sheet th { background: #e6e6e6; font-weight: 400; font-size: 12px; color: #333; }
.sheet thead th { height: 17px; line-height: 16px; border-color: #9b9b9b; border-right-color: #bbb; }
.sheet thead .cur { background: #d2d2d2; color: #217346; border-bottom: 2px solid #217346; line-height: 15px; }
.sheet tbody th { border-right-color: #9b9b9b; border-bottom-color: #c0c0c0; line-height: 14px; vertical-align: bottom; }
.sheet tbody th.cur { background: #d2d2d2; color: #217346; border-right: 2px solid #217346; }
.corner::after { content: ""; display: block; margin: 3px 3px 0 auto; width: 0; border: 4px solid #b5b5b5; border-top-color: transparent; border-left-color: transparent; }
.sheet .data { text-align: center; font-size: 18px; line-height: 23px; }
.sheet .pv { border-right-color: #fff; border-bottom-color: #fff; font-size: 12px; line-height: 21px; vertical-align: top; }
.sheet .pv.end { border-right-color: #d4dff0; }
.sheet .num { text-align: right; padding-right: 2px; }
.sheet .head { background: #4472c4; color: #fff; font-weight: 500; border-color: #4472c4; box-shadow: 0 -2px #2f5597; padding-left: 3px; }
.sheet .head.end { border-right-color: #4472c4; }
.sheet .day { background: #d9e1f2; border-color: #d9e1f2; font-weight: 700; font-size: 13px; }
.sheet .tot { font-weight: 700; box-shadow: 0 -1px #305496; border-bottom: 2px solid #305496; padding-left: 3px; }
.sheet .tot.num { font-size: 13px; }
.sheet .kid { padding-left: 28px; }
.headcell { display: flex; justify-content: space-between; align-items: center; }
.headcell button { width: 17px; height: 17px; margin-top: 5px; background: #f4f4f4; border: 1px solid #c6c6c6; display: grid; place-items: center; }
.pm { display: inline-block; width: 7px; height: 7px; border: 1px solid #8fa3c0; margin: 0 2px 1px 5px; position: relative; vertical-align: middle; }
.pm::after { content: ""; position: absolute; left: 1px; right: 1px; top: 2px; height: 1px; background: #556; }
.sheet .active { position: relative; }
.sheet .active::after { content: ""; position: absolute; inset: -3px -2px -1px -3px; border: 2px solid #217346; }
.vscroll { display: flex; flex-direction: column; gap: 1px; padding: 3px 3px 0; background: #e6e6e6; }
.vscroll button, .hscroll button { width: 15px; height: 14px; background: #fff; border: 1px solid #ababab; display: grid; place-items: center; flex: none; }
.track { flex: 473; background: #dadada; }
.thumb { flex: 247; background: #fff; border: 1px solid #ababab; }
.sheetbar { grid-column: 1 / -1; display: flex; border-top: 1px solid #9b9b9b; border-bottom: 1px solid #c6c6c6; }
.nav { width: 100px; display: flex; gap: 24px; padding: 8px 0 0 27px; }
.stabs { display: flex; height: 24px; font-size: 13px; line-height: 21px; }
.stabs button { padding: 0 12px 2px; position: relative; }
.stabs button::after { content: ""; position: absolute; right: 0; top: 4px; bottom: 1px; width: 1px; background: #9b9b9b; }
.stabs .on { background: #fff; color: #217346; font-weight: 500; border-bottom: 3px solid #217346; padding: 0 12px 1px; margin-top: -1px; }
.stabs .on::after { display: none; }
.stabs .blue, .stabs .orange { color: #111; font-weight: 500; background: linear-gradient(#bdd7ee, #bdd7ee) 2px 2px / calc(100% - 5px) 21px no-repeat; padding: 0 14px 2px 13px; }
.stabs .orange { background-image: linear-gradient(#f4b084, #f4b084); padding: 0 12px 2px; }
.stabs button:last-child { padding: 0 13px 2px 14px; }
.add { margin: 0 0 2px 34px; align-self: center; }
.hscroll { margin-left: auto; display: flex; width: 621px; padding: 6px 21px 0 0; align-items: flex-start; justify-content: space-between; background: #e6e6e6; }
.hthumb { width: 380px; height: 14px; background: #fff; border: 1px solid #ababab; }

/* field pane */
.pane { width: 259px; flex: none; display: flex; flex-direction: column; border-left: 1px solid #b5b5b5; padding: 13px 12px 0 12px; border-bottom: 1px solid #c6c6c6; min-height: 0; }
.ptitle { display: flex; align-items: center; gap: 9px; height: 28px; margin-right: -2px; padding-bottom: 5px; }
.ptitle h2 { margin: 5px auto 0 1px; font-weight: 400; font-size: 21px; line-height: 28px; color: #217346; }
.ptitle button { color: #666; }
.psub { display: flex; align-items: center; justify-content: space-between; height: 28px; margin-top: 7px; padding-left: 1px; }
.gear { width: 44px; height: 27px; background: #fff; border: 1px solid #ababab; display: flex; align-items: center; justify-content: space-evenly; }
.search { display: flex; align-items: center; margin-top: 13px; height: 22px; background: #fff; border: 1px solid #ababab; padding: 0 2px 0 1px; }
.search input { flex: 1; min-width: 0; }
.search input::placeholder { color: #666; opacity: 1; }
.fields { margin-top: 18px; height: 261px; flex: 0 1 261px; background: #fff; padding-left: 2px; overflow: hidden; }
.fields label { display: flex; align-items: center; gap: 6px; height: 21px; padding-bottom: 4px; }
.fields a { display: block; margin-top: 9px; color: inherit; text-decoration: none; }
.bold { font-weight: 700; }
input[type=checkbox] { appearance: none; width: 13px; height: 13px; border: 1px solid #ababab; background: #fff; display: grid; place-items: center; }
input[type=checkbox]:checked::after { content: ""; width: 4px; height: 8px; border: solid #777; border-width: 0 2px 2px 0; transform: rotate(40deg); margin-top: -2px; }
.drag { margin: 16px 0 0 2px; border-top: 1px dotted #b5b5b5; padding: 5px 0 0 2px; height: 39px; }
.areas { display: grid; grid-template-columns: 115px 1fr; margin: 0 -1px 0 3px; }
.areas section { padding-right: 6px; height: 139px; }
.areas section:nth-child(even) { border-left: 1px solid #b5b5b5; padding: 0 0 0 2px; }
.areas section:nth-child(n+3) { border-top: 1px solid #b5b5b5; padding-top: 5px; }
.areas h3 { margin: 0; display: flex; align-items: center; gap: 7px; height: 24px; padding: 0 0 4px 4px; font: inherit; }
.areas em { color: #888; font: 14px/16px "Liberation Serif", serif; width: 12px; }
.drop { background: #fff; height: 109px; padding: 2px 1px; display: flex; flex-direction: column; gap: 2px; }
.drop button { height: 23px; border: 1px solid #ababab; background: #fff; display: flex; align-items: center; padding: 0 9px 1px 6px; }
.drop button em { margin: 0 4px 0 2px; }
.drop .dd { margin-left: auto; }
.defer { display: flex; justify-content: space-between; align-items: center; margin: 21px 0 0 3px; height: 24px; }
.defer label { display: flex; align-items: center; gap: 6px; }
.defer button { background: #fafafa; color: #bbb; height: 22px; padding: 0 5px; }

/* status bar */
.status { height: 20px; flex: none; display: flex; align-items: center; background: #f1f1f1; padding-left: 7px; line-height: 20px; gap: 18px; }
.views { margin-left: auto; display: flex; gap: 2px; margin-right: -14px; }
.views button { width: 36px; height: 20px; display: grid; place-items: center; }
.views .on { background: #cdcdcd; }
.zoombox { display: flex; align-items: center; gap: 2px; padding-right: 25px; }
.zb { width: 12px; font-size: 16px; text-align: center; }
.zoom { appearance: none; width: 100px; height: 14px; background: linear-gradient(#999, #999) 0 50% / 100% 1px no-repeat; }
.zoom::-webkit-slider-thumb { appearance: none; width: 5px; height: 12px; background: #555; }
.pct { margin-left: 10px; }

/* floating toolbar and menus */
.minibar, .menu { position: absolute; background: #fff; border: 1px solid #c6c6c6; box-shadow: 2px 2px 4px rgba(0, 0, 0, .2); }
.minibar { left: 656px; top: 411px; width: 269px; height: 56px; padding: 3px 2px 0; }
.minibar .row { height: 24px; }
.minibar .ic { height: 22px; }
.minibar .fc { width: 16px; height: 18px; margin: 2px 5px 0 7px; }
.minibar .dd { margin: 0 1px; }
.minibar .pc { margin-left: 4px; }
.menu { padding: 1px; }
.ctx { left: 655px; top: 482px; width: 182px; }
.submenu { left: 835px; top: 630px; width: 216px; }
.menu button { position: relative; display: grid; grid-template-columns: 24px 1fr auto; column-gap: 7px; align-items: center; width: 100%; height: 25px; color: #555; padding-right: 9px; }
.menu button svg { justify-self: center; }
.menu button span { grid-column: 2; }
.menu .hot { background: #c5c5c5; color: #333; }
.menu hr { height: 1px; margin: 0 1px 1px 32px; border: 0; background: #e0e0e0; }
.boxed { background: #e3f1ea; outline: 1px solid #a6cdb8; padding: 2px; }
.arrows { position: absolute; left: 618px; top: 471px; filter: drop-shadow(2px 2px 2px rgba(0, 0, 0, .35)); pointer-events: none; }

/* site mark */
.mark { position: absolute; right: 10px; bottom: 6px; display: flex; align-items: center; opacity: .85; }
.mark div { display: flex; flex-direction: column; }
.mark svg { margin-right: -52px; }
.mark strong { position: relative; font-size: 21px; line-height: 24px; color: #4d9ad6; font-weight: 700; }
.mark a { font-size: 16px; line-height: 20px; color: #4fb56c; text-decoration: none; }
```
FILE: script.js
```js
const columns = { A: 113, B: 68, C: 68, D: 68, E: 36, F: 70, G: 82, H: 77, I: 85, J: 97, K: 97, L: 97, M: 97, N: 97, O: 97, P: 97, Q: 97 };

const products = [
  ['日期', '编号', '产品', '数量'],
  ['2023/3/24', 1, '香蕉', 4], ['2023/3/24', 2, '梨', 6], ['2023/3/24', 3, '苹果', 5],
  ['2023/3/25', 4, '葡萄', 2], ['2023/3/25', 5, '西瓜', 8], ['2023/3/25', 6, '荔枝', 2],
  ['2023/3/28', 7, '哈密瓜', 9], ['2023/3/28', 8, '橘子', 1], ['2023/3/28', 9, '樱桃', 9],
  ['2023/3/28', 10, '车厘子', 7]
];

const pivot = [
  ['head', '行标签', '求和项:数量', '求和项:数量2'],
  ['day', '2023/3/24', 15], ['kid', '梨', 6], ['kid', '苹果', 5], ['kid', '香蕉', 4],
  ['day', '2023/3/25', 12], ['kid', '荔枝', 2], ['kid', '葡萄', 2], ['kid', '西瓜', 8],
  ['day', '2023/3/28', 26], ['kid', '车厘子', 7], ['kid', '哈密瓜', 9], ['kid', '橘子', 1], ['kid', '樱桃', 9],
  ['tot', '总计', 53]
];

function cell(row, name, index) {
  const record = products[row - 59];
  if (record && index < 4) return `<td class="data">${record[index]}</td>`;
  const line = pivot[row - 59];
  const part = index - 6;
  if (!line || part < 0 || part > 2) return '<td></td>';
  const kind = line[0];
  const end = part === 2 ? ' end' : '';
  if (kind === 'head') {
    return part === 0
      ? `<td class="pv head"><div class="headcell">${line[1]}<button aria-label="筛选"><i class="dd big-dd"></i></button></div></td>`
      : `<td class="pv head${end}">${line[part + 1]}</td>`;
  }
  if (part === 0) return `<td class="pv ${kind}">${kind === 'day' ? '<span class="pm"></span>' : ''}${line[1]}</td>`;
  const style = kind === 'kid' ? '' : kind;
  const active = row === 67 && name === 'I' ? ' active' : '';
  return `<td class="pv num ${style}${end}${active}">${line[2]}</td>`;
}

const names = Object.keys(columns);
let html = '<colgroup><col style="width:23px">' + names.map(n => `<col style="width:${columns[n]}px">`).join('') + '</colgroup>';
html += '<thead><tr><th class="corner"></th>' + names.map(n => `<th class="${n === 'I' ? 'cur' : ''}">${n}</th>`).join('') + '</tr></thead><tbody>';
for (let row = 58; row <= 88; row++) {
  html += `<tr><th class="${row === 67 ? 'cur' : ''}">${row}</th>` + names.map((n, i) => cell(row, n, i)).join('') + '</tr>';
}
document.getElementById('sheet').innerHTML = html + '</tbody>';
```
